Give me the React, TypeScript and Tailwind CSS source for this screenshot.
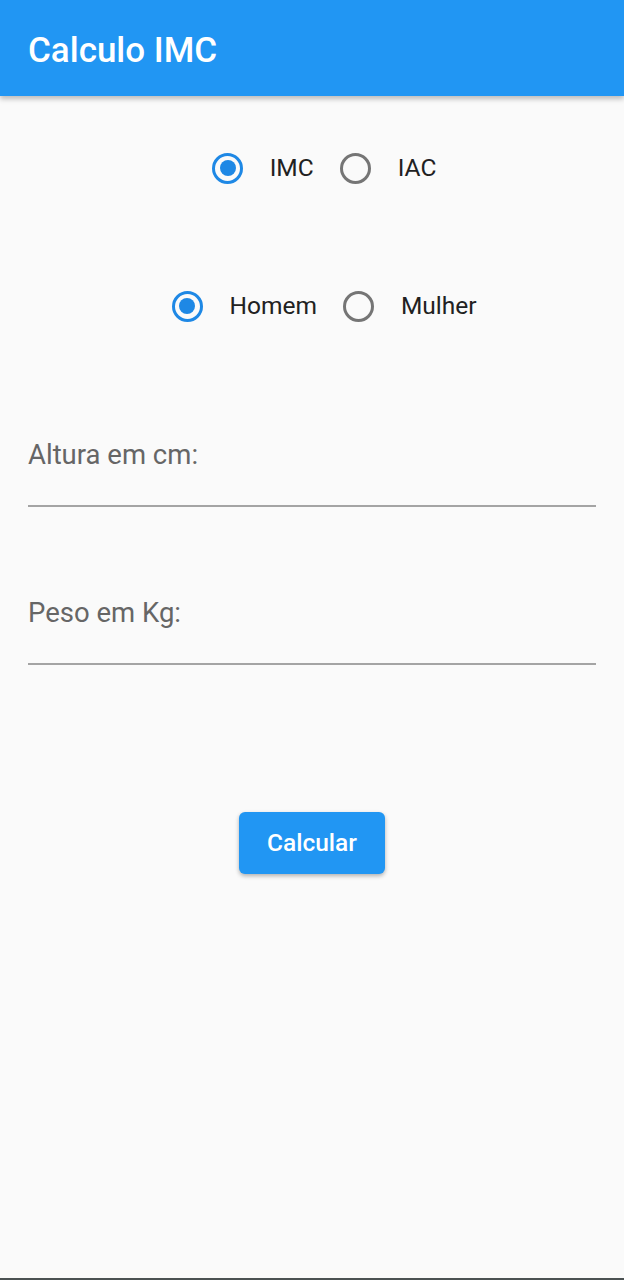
import React, { useState } from "react";

type RadioProps = { checked: boolean; onClick: () => void };

const Radio: React.FC<RadioProps> = ({ checked, onClick }) => (
  <button
    type="button"
    onClick={onClick}
    className="flex h-12 w-12 items-center justify-center"
  >
    <span
      className={`flex h-[31px] w-[31px] items-center justify-center rounded-full border-[3.5px] ${
        checked ? "border-[#1e88e5]" : "border-[#757575]"
      }`}
    >
      {checked && <span className="h-[16px] w-[16px] rounded-full bg-[#1e88e5]" />}
    </span>
  </button>
);

const RadioRow: React.FC<{
  options: string[];
  value: string;
  onChange: (v: string) => void;
}> = ({ options, value, onChange }) => (
  <div className="flex items-center justify-center pl-4">
    {options.map((opt, i) => (
      <div key={opt} className={`flex items-center ${i > 0 ? "ml-[18px]" : ""}`}>
        <Radio checked={value === opt} onClick={() => onChange(opt)} />
        <span className="ml-[18px] text-[24.5px] text-[#212121]">{opt}</span>
      </div>
    ))}
  </div>
);

const Field: React.FC<{ label: string }> = ({ label }) => (
  <div className="mx-[28px]">
    <div className="text-[27.5px] leading-[32px] text-[#666666]">{label}</div>
    <div className="mt-[34px] h-[2px] bg-[#a4a4a4]" />
  </div>
);

const App: React.FC = () => {
  const [tipo, setTipo] = useState("IMC");
  const [sexo, setSexo] = useState("Homem");

  return (
    <div className="flex h-[1280px] w-[624px] flex-col bg-[#fafafa] font-['Roboto',sans-serif]">
      <header className="z-10 flex h-[96px] shrink-0 items-center bg-[#2196f3] px-[28px] pt-[5px] shadow-[0_3px_5px_rgba(0,0,0,0.25)]">
        <h1 className="text-[35px] font-medium leading-none text-white">Calculo IMC</h1>
      </header>

      <div className="mt-[48px]">
        <RadioRow options={["IMC", "IAC"]} value={tipo} onChange={setTipo} />
      </div>
      <div className="mt-[90px]">
        <RadioRow options={["Homem", "Mulher"]} value={sexo} onChange={setSexo} />
      </div>

      <div className="mt-[109px]">
        <Field label="Altura em cm:" />
      </div>
      <div className="mt-[90px]">
        <Field label="Peso em Kg:" />
      </div>

      <div className="mt-[147px] flex justify-center">
        <button
          type="button"
          className="h-[62px] w-[146px] rounded-[6px] bg-[#2196f3] text-[24.5px] font-medium text-white shadow-[0_2px_4px_rgba(0,0,0,0.3)]"
        >
          Calcular
        </button>
      </div>

      <div className="flex-1" />
      <div className="h-[2px] bg-[#4b5152]" />
    </div>
  );
};

export default App;
